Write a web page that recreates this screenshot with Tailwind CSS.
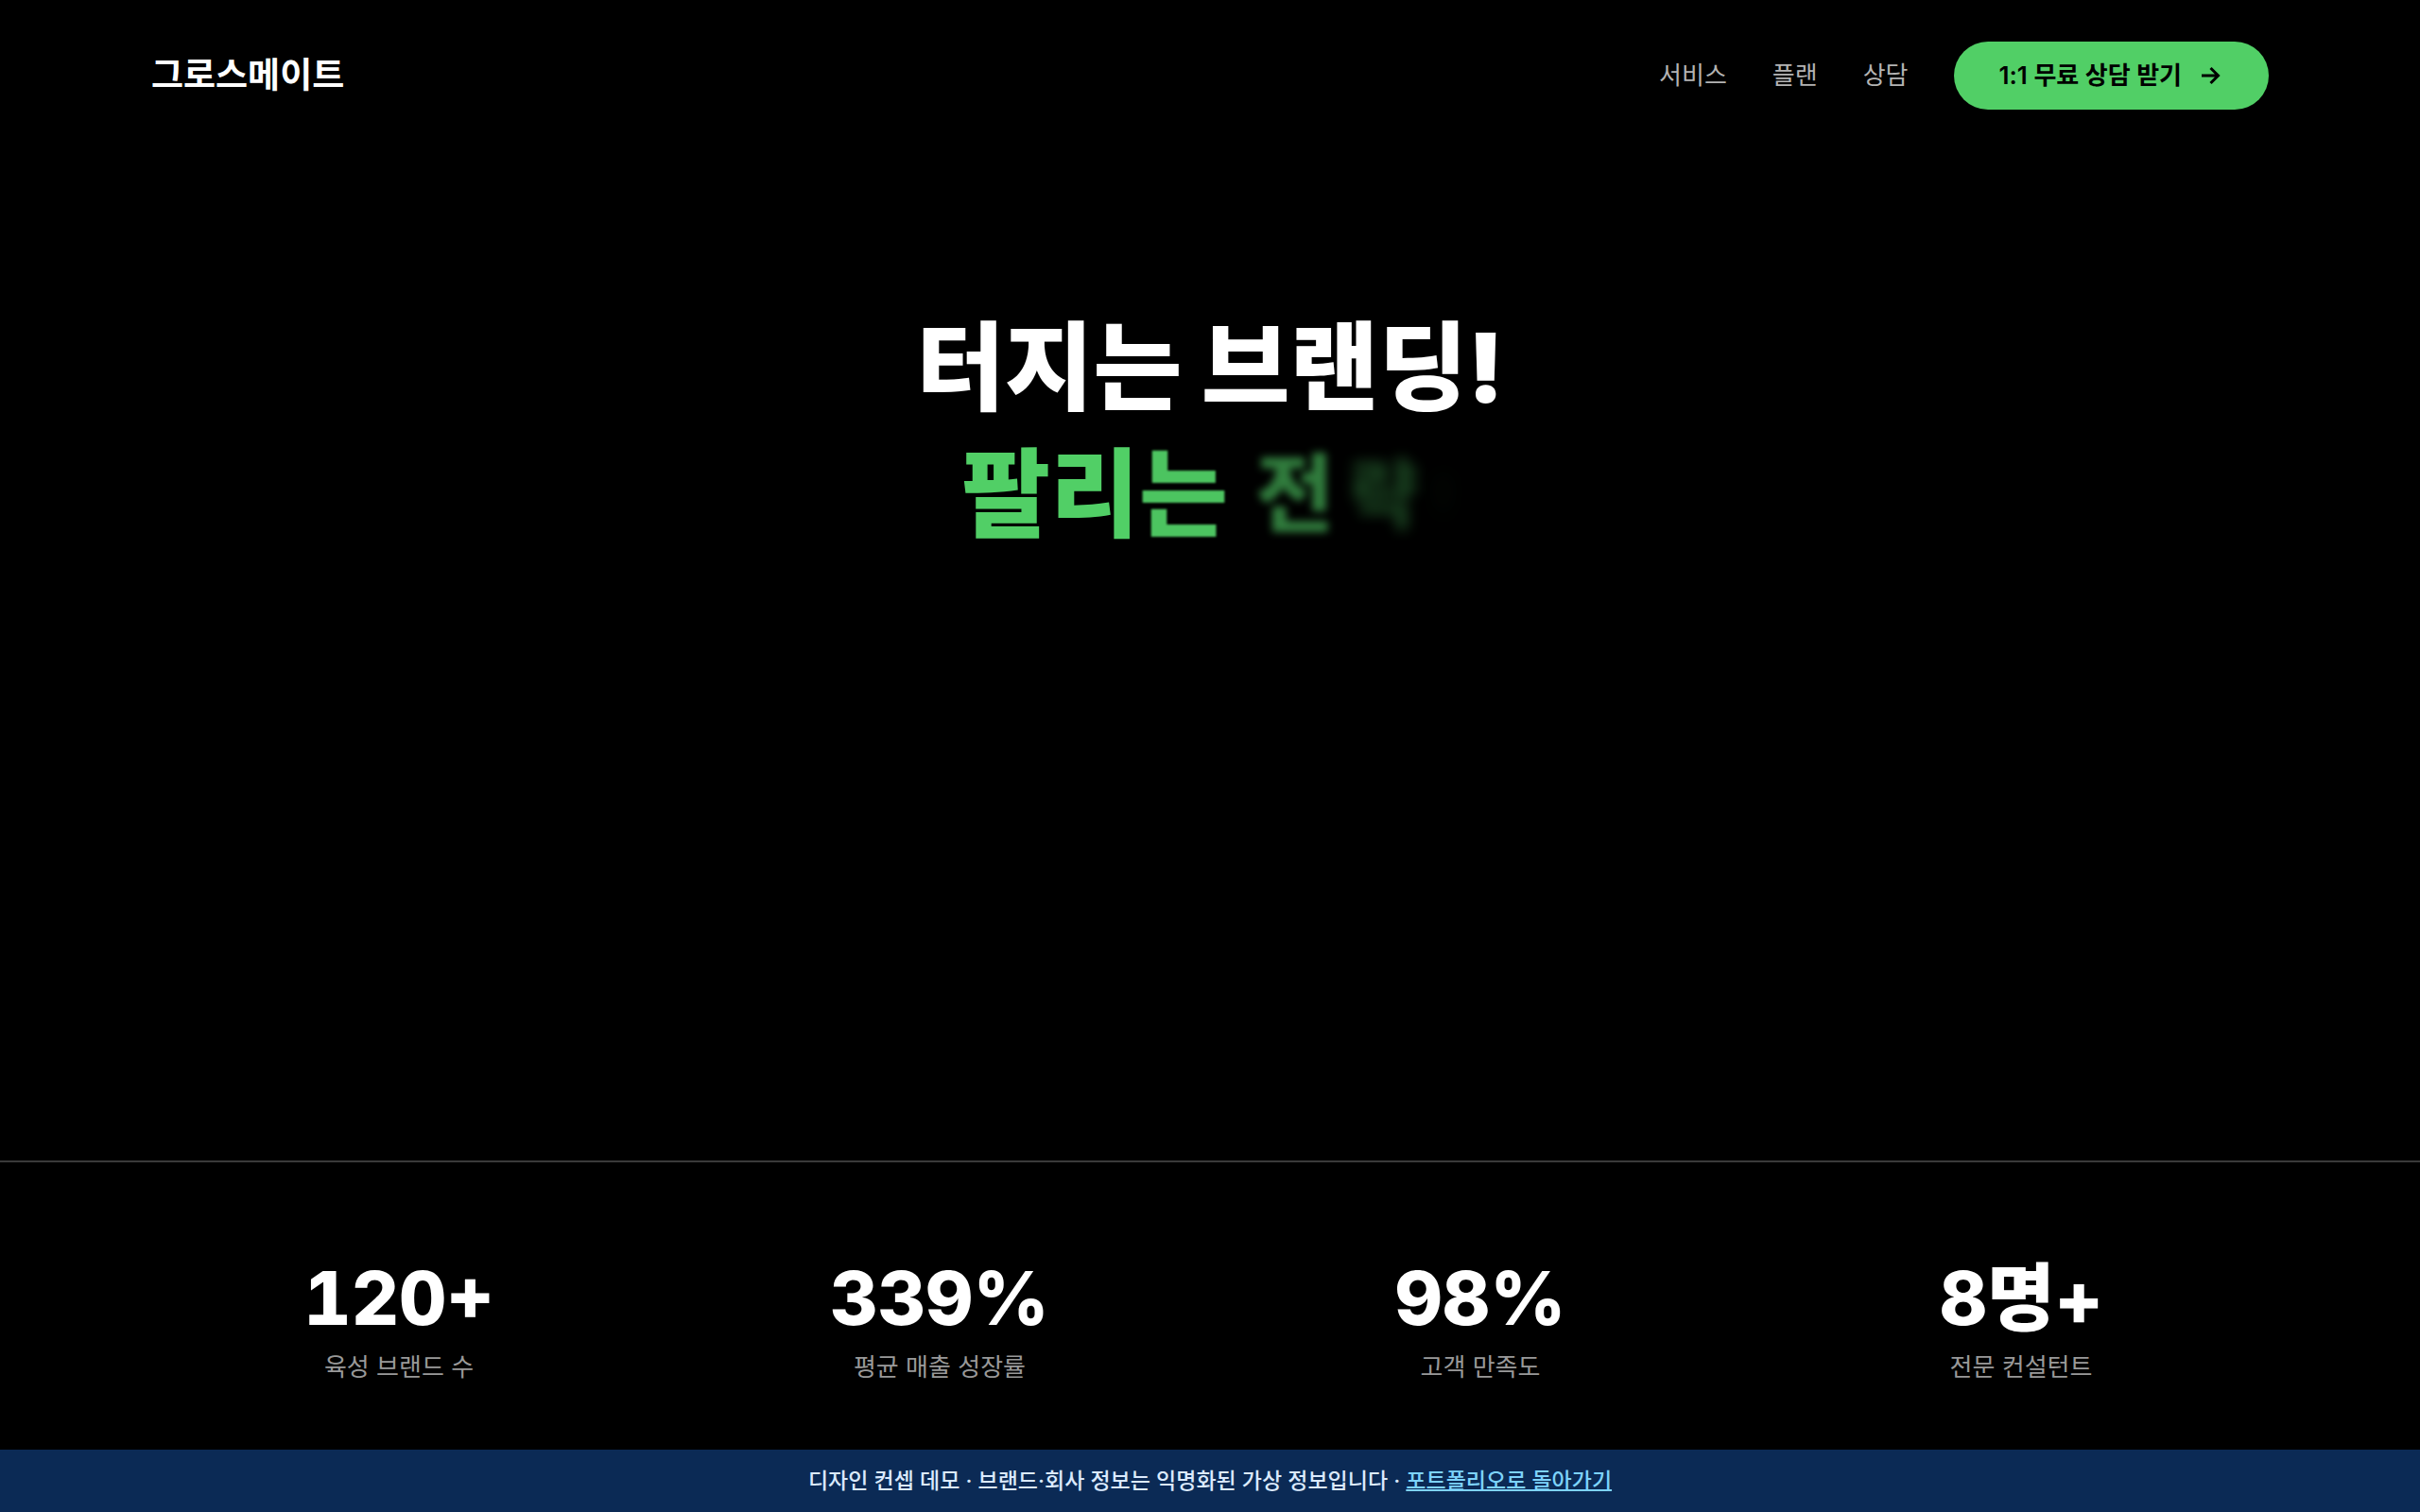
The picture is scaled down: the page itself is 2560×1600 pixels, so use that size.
<!DOCTYPE html>
<html lang="ko">
<head>
    <meta charset="UTF-8">
    <meta name="viewport" content="width=device-width, initial-scale=1.0">
    <title>그로스메이트</title>
    <script src="https://cdn.jsdelivr.net/npm/@tailwindcss/browser@4"></script>
</head>
<body class="flex min-h-screen flex-col bg-black font-[Inter,'Noto_Sans_CJK_KR',sans-serif] text-white">
    <!-- Header -->
    <header class="flex items-center justify-between px-40 py-11">
        <a href="#" class="text-[37px] leading-[56px] font-bold">그로스메이트</a>
        <nav class="flex items-center gap-12 text-[26px] leading-10 text-[#b3b3b3]">
            <a href="#services">서비스</a>
            <a href="#plans">플랜</a>
            <a href="#contact">상담</a>
            <a href="#contact" class="flex h-[72px] items-center gap-5 rounded-full bg-[#51cf66] px-12 font-semibold text-black">
                1:1 무료 상담 받기
                <svg class="size-6" viewBox="0 0 24 24" fill="none" stroke="currentColor" stroke-width="3">
                    <path d="M1 12h17M10.5 4l8 8-8 8" />
                </svg>
            </a>
        </nav>
    </header>

    <!-- Hero -->
    <main class="flex-1 px-40 pt-[162px]">
        <h1 class="text-center text-[102px] leading-[134px] font-black">
            <span class="block">터지는 브랜딩!</span>
            <span class="flex items-center justify-center text-[#51cf66]">
                <span>팔</span>
                <span>리</span>
                <span class="opacity-95 blur-[1px]">는</span>
                <span class="ml-6 w-[94px] text-[90px] opacity-60 blur-[4px]">전</span>
                <span class="w-[94px] text-[80px] opacity-30 blur-[7px]">략</span>
                <span class="w-8 text-[60px] opacity-5 blur-[12px]">!</span>
            </span>
        </h1>
    </main>

    <!-- Stats -->
    <section class="border-t-2 border-[#3a3a3a] px-40 pt-24 pb-[66px]">
        <dl class="grid grid-cols-4 gap-12 text-center">
            <div class="flex flex-col-reverse gap-1">
                <dt class="text-[26px] leading-[42px] text-[#999999]">육성 브랜드 수</dt>
                <dd class="text-[78px] leading-24 font-extrabold tabular-nums">120+</dd>
            </div>
            <div class="flex flex-col-reverse gap-1">
                <dt class="text-[26px] leading-[42px] text-[#999999]">평균 매출 성장률</dt>
                <dd class="text-[78px] leading-24 font-extrabold tabular-nums">339%</dd>
            </div>
            <div class="flex flex-col-reverse gap-1">
                <dt class="text-[26px] leading-[42px] text-[#999999]">고객 만족도</dt>
                <dd class="text-[78px] leading-24 font-extrabold tabular-nums">98%</dd>
            </div>
            <div class="flex flex-col-reverse gap-1">
                <dt class="text-[26px] leading-[42px] text-[#999999]">전문 컨설턴트</dt>
                <dd class="text-[78px] leading-24 font-extrabold tabular-nums">8명+</dd>
            </div>
        </dl>
    </section>

    <!-- Demo notice -->
    <footer class="bg-[#0b2a55] py-3 text-center text-[23px] leading-[42px] font-medium text-[#dbeafe]">
        디자인 컨셉 데모 · 브랜드·회사 정보는 익명화된 가상 정보입니다 ·
        <a href="#" class="text-[#7dd3fc] underline decoration-2">포트폴리오로 돌아가기</a>
    </footer>
</body>
</html>
